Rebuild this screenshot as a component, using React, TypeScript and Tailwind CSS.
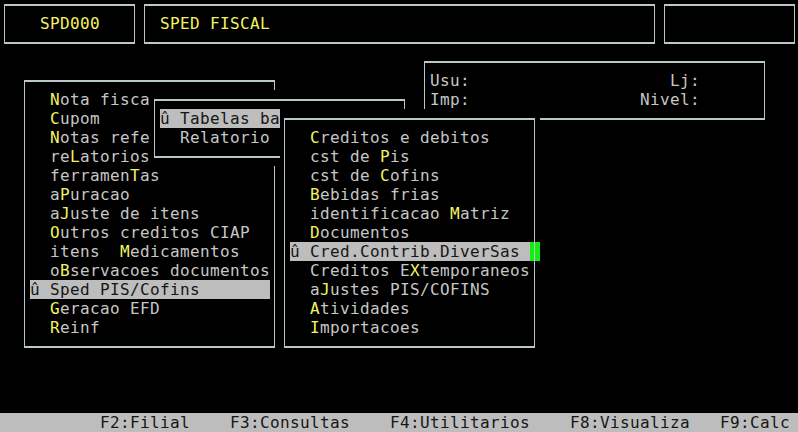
import React from 'react'

type Fg = 'txt' | 'yel' | 'dark'
type Bg = 'none' | 'hl' | 'green'

type Cell = {
  ch: string
  fg: Fg
  bg: Bg
  arms: string
}

const COLS = 80
const ROWS = 23

const FG: Record<Fg, string> = {
  txt: 'text-[#c6c6c6]',
  yel: 'text-[#f4f45c]',
  dark: 'text-[#161616]',
}

const BG: Record<Bg, string> = {
  none: 'bg-black',
  hl: 'bg-[#bdbdbd]',
  green: 'bg-[#12ee12]',
}

const LINE = 'bg-[#b9c7ca]'

function buildScreen() {
  const g: Cell[][] = Array.from({ length: ROWS }, () =>
    Array.from({ length: COLS }, () => ({ ch: ' ', fg: 'txt' as Fg, bg: 'none' as Bg, arms: '' }))
  )

  // '~' marks the hotkey letter (yellow) that follows it
  const text = (r: number, c: number, s: string, fg: Fg = 'txt', bg: Bg = 'none') => {
    let col = c
    let hot = false
    for (const ch of s) {
      if (ch === '~') {
        hot = true
        continue
      }
      if (col < COLS) g[r][col] = { ch, fg: hot && fg === 'txt' ? 'yel' : fg, bg, arms: '' }
      hot = false
      col++
    }
  }

  const box = (r1: number, c1: number, r2: number, c2: number) => {
    for (let r = r1; r <= r2; r++) {
      for (let c = c1; c <= c2; c++) {
        let arms = ''
        if (r === r1) arms = c === c1 ? 'RD' : c === c2 ? 'LD' : 'LR'
        else if (r === r2) arms = c === c1 ? 'UR' : c === c2 ? 'UL' : 'LR'
        else if (c === c1 || c === c2) arms = 'UD'
        g[r][c] = { ch: ' ', fg: 'txt', bg: 'none', arms }
      }
    }
  }

  const bar = (r: number, c1: number, c2: number, s: string) => {
    const padded = s.padEnd(c2 - c1 + 1, ' ')
    text(r, c1, padded, 'dark', 'hl')
  }

  // header
  box(0, 0, 2, 13)
  text(1, 4, 'SPD000', 'yel')
  box(0, 14, 2, 65)
  text(1, 16, 'SPED FISCAL', 'yel')
  box(0, 66, 2, 79)

  // user info
  box(3, 42, 6, 76)
  text(4, 43, 'Usu:')
  text(4, 67, 'Lj:')
  text(5, 43, 'Imp:')
  text(5, 64, 'Nivel:')

  // main menu
  box(4, 2, 18, 27)
  const mainItems = [
    '~Nota fiscal',
    '~Cupom',
    '~Notas referenciadas',
    're~Latorios',
    'ferramen~Tas',
    'a~Puracao',
    'a~Juste de itens',
    '~Outros creditos CIAP',
    'itens  ~Medicamentos',
    'o~Bservacoes documentos',
    '',
    '~Geracao EFD',
    '~Reinf',
  ]
  mainItems.forEach((item, i) => {
    if (item) text(5 + i, 5, item)
  })
  bar(15, 3, 26, 'û Sped PIS/Cofins')

  // first submenu
  box(5, 15, 8, 40)
  bar(6, 16, 39, 'û Tabelas basicas')
  text(7, 18, 'Relatorio')

  // second submenu
  box(6, 28, 18, 53)
  const subItems = [
    '~Creditos e debitos',
    'cst de ~Pis',
    'cst de ~Cofins',
    '~Bebidas frias',
    'identificacao ~Matriz',
    '~Documentos',
    '',
    'Creditos E~Xtemporaneos',
    'a~Justes PIS/COFINS',
    '~Atividades',
    '~Importacoes',
  ]
  subItems.forEach((item, i) => {
    if (item) text(7 + i, 31, item)
  })
  bar(13, 29, 52, 'û Cred.Contrib.DiverSas')
  g[13][53].bg = 'green'

  // function key bar
  bar(22, 0, COLS - 1, '')
  text(22, 10, 'F2:Filial', 'dark', 'hl')
  text(22, 23, 'F3:Consultas', 'dark', 'hl')
  text(22, 39, 'F4:Utilitarios', 'dark', 'hl')
  text(22, 57, 'F8:Visualiza', 'dark', 'hl')
  text(22, 72, 'F9:Calc', 'dark', 'hl')

  return g
}

function CellView({ cell }: { cell: Cell }) {
  if (cell.arms) {
    const on = (k: string) => (cell.arms.includes(k) ? LINE : '')
    return (
      <span className={`grid h-[19px] w-[10px] shrink-0 grid-cols-[4px_1px_5px] grid-rows-[9px_2px_8px] ${BG[cell.bg]}`}>
        <span />
        <span className={on('U')} />
        <span />
        <span className={on('L')} />
        <span className={LINE} />
        <span className={on('R')} />
        <span />
        <span className={on('D')} />
        <span />
      </span>
    )
  }
  return (
    <span className={`block h-[19px] w-[10px] shrink-0 whitespace-pre leading-[19px] ${BG[cell.bg]} ${FG[cell.fg]}`}>
      {cell.ch}
    </span>
  )
}

export default function App() {
  const screen = buildScreen()

  return (
    <div className="h-[432px] w-[798px] overflow-hidden bg-black font-['DejaVu_Sans_Mono',monospace] text-[16px]">
      <div className="-mt-[5px] flex flex-col">
        {screen.map((row, r) => (
          <div key={r} className="flex h-[19px]">
            {row.map((cell, c) => (
              <CellView key={c} cell={cell} />
            ))}
          </div>
        ))}
      </div>
    </div>
  )
}
